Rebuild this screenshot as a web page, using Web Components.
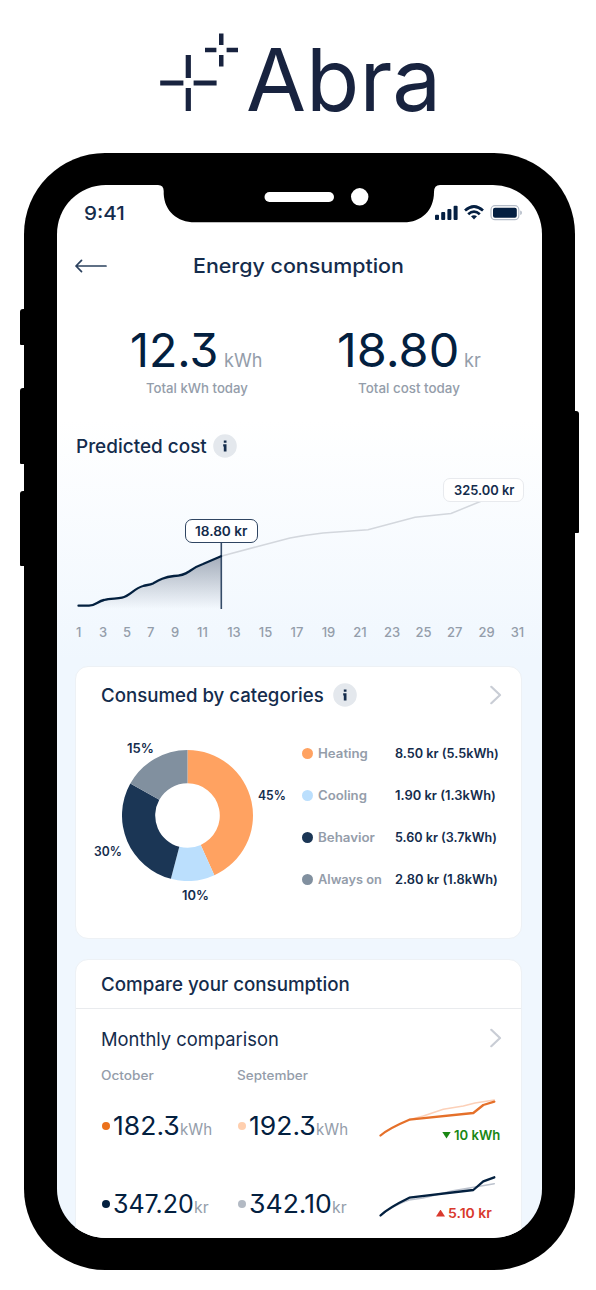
<!DOCTYPE html>
<html lang="en">
<head>
  <meta charset="utf-8">
  <title>Abra</title>
  <style>
    body {
      margin: 0;
      height: 1290px;
      overflow: hidden;
      background: #fff;
      color: #142c4c;
      font-family: Inter, "Liberation Sans", sans-serif;
    }
  </style>
</head>
<body>
  <abra-logo></abra-logo>
  <phone-frame>
    <status-bar></status-bar>
    <app-header>Energy consumption</app-header>
    <today-stats></today-stats>
    <predicted-cost></predicted-cost>
    <category-card></category-card>
    <compare-card></compare-card>
  </phone-frame>

  <script>
    class BaseElement extends HTMLElement {
      constructor() {
        super();
        this.shadowDOM = this.attachShadow({ mode: "open" });
      }

      connectedCallback() {
        this.render();
      }
    }

    class AbraLogo extends BaseElement {
      render() {
        this.shadowDOM.innerHTML = `
          <style>
          :host {
            display: flex;
            height: 153px;
            padding-left: 160px;
            box-sizing: border-box;
            color: #18233f;
          }

          svg {
            margin-top: 33px;
            flex: none;
          }

          fit-text {
            margin-left: 10px;
            margin-top: 29.5px;
            height: 100px;
            font-size: 87px;
            line-height: 100px;
          }
          </style>
          <svg width="78" height="79" viewBox="160 33 78 79" fill="currentColor">
            <path d="M185.7 55h5.2v23h-5.2zM185.7 88h5.2v23h-5.2zM160.2 80.4h23.2v5.2h-23.2zM193.6 80.4h23v5.2h-23z"/>
            <path d="M219 33.5h4.5v11.6h-4.5zM219 55h4.5v11.5h-4.5zM205 47.8h11.4v4.5h-11.4zM226.6 47.8h11.4v4.5h-11.4z"/>
          </svg>
          <fit-text w="189">Abra</fit-text>
        `;
      }
    }

    class PhoneFrame extends BaseElement {
      render() {
        this.shadowDOM.innerHTML = `
          <style>
          :host {
            display: block;
            position: relative;
            box-sizing: border-box;
            width: 551px;
            height: 1117px;
            margin-left: 24px;
            padding: 32px 33px;
            border-radius: 81px;
            background: #000;
          }

          .screen {
            position: relative;
            height: 1053px;
            overflow: hidden;
            border-radius: 49px;
            background: linear-gradient(#fff 0, #fff 235px, #f0f7fe 475px);
          }

          .notch {
            position: absolute;
            left: 98px;
            top: -1px;
          }

          .key {
            position: absolute;
            width: 10px;
            background: #000;
            border-radius: 3px 0 0 1px;
          }
          </style>
          <i class="key" style="left:-4px;top:156px;height:36px"></i>
          <i class="key" style="left:-4px;top:235px;height:76px"></i>
          <i class="key" style="left:-4px;top:338px;height:75px"></i>
          <i class="key" style="right:-4px;top:258px;height:122px;border-radius:0 3px 1px 0"></i>
          <div class="screen">
            <slot></slot>
            <svg class="notch" width="290" height="40" viewBox="155 184 290 40">
              <path d="M155 184V185H158Q163.7 185 163.7 191V194C164.5 211 177 222.3 195 222.3H404C421 222.3 434 211 434 192Q434 185 440 185H445V184Z"/>
              <rect x="264.5" y="192" width="69.5" height="10" rx="5" fill="#fff"/>
              <circle cx="359.7" cy="196.8" r="8.7" fill="#fff"/>
            </svg>
          </div>
        `;
      }
    }

    class StatusBar extends BaseElement {
      render() {
        this.shadowDOM.innerHTML = `
          <style>
          :host {
            display: flex;
            align-items: center;
            height: 56px;
            padding: 0 20px 0 27px;
            font-size: 19px;
            font-weight: 500;
          }

          svg {
            margin-left: auto;
          }
          </style>
          <fit-text w="39.5">9:41</fit-text>
          <svg width="87" height="16" viewBox="435 205 87 16" fill="#041f41">
            <rect x="435" y="214.8" width="4" height="5.2" rx="1"/>
            <rect x="441.2" y="212" width="4" height="8" rx="1"/>
            <rect x="447.4" y="209" width="4" height="11" rx="1"/>
            <rect x="453.6" y="205.8" width="4" height="14.2" rx="1"/>
            <g fill="none" stroke="#041f41" stroke-width="2.7">
              <path d="M465 210.6Q474 202.4 483 210.6"/>
              <path d="M468.2 214.3Q474 209 479.8 214.3"/>
            </g>
            <path d="M471 216.3Q474 214 477 216.3L474 219.6Z"/>
            <rect x="491" y="205.7" width="27.8" height="14" rx="4" fill="none" stroke="#b4bcc8" stroke-width="1.2"/>
            <rect x="493" y="207.7" width="23.8" height="10" rx="2"/>
            <path d="M520.2 210.5Q522 211 522 212.8T520.2 215Z" fill="#b4bcc8"/>
          </svg>
        `;
      }
    }

    class AppHeader extends BaseElement {
      render() {
        this.shadowDOM.innerHTML = `
          <style>
          :host {
            display: grid;
            grid-template-columns: 32px 1fr 32px;
            align-items: center;
            justify-items: center;
            height: 50px;
            padding: 0 21px 0 18px;
            font-size: 20px;
            font-weight: 500;
          }
          </style>
          <svg width="32" height="14" fill="none" stroke="#2b415e" stroke-width="1.7" stroke-linecap="round" stroke-linejoin="round">
            <path d="M31 7H1M6.5 1.4L1 7L6.5 12.6"/>
          </svg>
          <fit-text w="209.5"><slot></slot></fit-text>
        `;
      }
    }

    class TodayStats extends BaseElement {
      render() {
        this.shadowDOM.innerHTML = `
          <style>
          :host {
            display: grid;
            grid-template-columns: 1fr 1fr;
            height: 105px;
            padding: 0 27px 0 33px;
            text-align: center;
          }

          .value {
            display: flex;
            justify-content: center;
            align-items: baseline;
            gap: 8px;
            height: 48px;
            margin-top: 35px;
            line-height: 48px;
            color: #03203f;
          }

          .big {
            font-size: 47px;
            font-feature-settings: "cv09";
          }

          .unit {
            font-size: 18.5px;
            color: #949daa;
          }

          .label {
            margin-top: 6px;
            font-size: 13px;
            font-weight: 500;
            line-height: 16px;
            color: #949daa;
          }
          </style>
          <div>
            <div class="value">
              <fit-text class="big" w="85">12.3</fit-text>
              <fit-text class="unit" w="37">kWh</fit-text>
            </div>
            <div class="label"><fit-text w="101">Total kWh today</fit-text></div>
          </div>
          <div>
            <div class="value">
              <fit-text class="big" w="119">18.80</fit-text>
              <fit-text class="unit" w="15.5">kr</fit-text>
            </div>
            <div class="label"><fit-text w="101">Total cost today</fit-text></div>
          </div>
        `;
      }
    }

    class InfoBadge extends BaseElement {
      render() {
        this.shadowDOM.innerHTML = `
          <style>
          :host {
            display: block;
            width: 24px;
            height: 24px;
          }
          </style>
          <svg width="24" height="24" fill="#142c4c">
            <circle cx="12" cy="12" r="11.8" fill="#e4e8ed"/>
            <path d="M10.8 6.6h2.7v2.2h-2.7zM10.2 10.2h3.3v7.2h-2.7v-5h-.6z"/>
          </svg>
        `;
      }
    }

    class ChevronIcon extends BaseElement {
      render() {
        this.shadowDOM.innerHTML = `
          <style>
          :host {
            display: block;
            height: 20px;
          }
          </style>
          <svg width="12" height="20" fill="none" stroke="#c9cdd5" stroke-width="2.2" stroke-linecap="round" stroke-linejoin="round">
            <path d="M1.3 1.8L10 10L1.3 18.2"/>
          </svg>
        `;
      }
    }

    class PredictedCost extends BaseElement {
      render() {
        const days = [];
        for (let day = 1; day <= 31; day += 2) {
          days.push(`<span class="${day < 10 ? "short" : ""}">${day}</span>`);
        }
        this.shadowDOM.innerHTML = `
          <style>
          :host {
            display: block;
            height: 270px;
            padding: 38px 18px 0 19px;
            box-sizing: border-box;
          }

          .title {
            display: flex;
            align-items: center;
            gap: 7.5px;
            height: 24px;
            font-size: 18.5px;
            font-weight: 500;
          }

          .chart {
            position: relative;
            height: 154px;
            margin-top: 12px;
          }

          svg {
            display: block;
          }

          .tip {
            position: absolute;
            box-sizing: border-box;
            height: 24px;
            border: 1.5px solid #2f4562;
            border-radius: 7px;
            background: #fff;
            font-size: 13px;
            font-weight: 600;
            line-height: 22px;
            text-align: center;
          }

          .now {
            left: 108.5px;
            top: 48.5px;
            width: 73px;
          }

          .end {
            left: 367px;
            top: 7.5px;
            width: 81px;
            border-color: #e8eaee;
          }

          .axis {
            display: flex;
            justify-content: space-between;
            margin: 0 -1px;
            font-size: 13px;
            font-weight: 500;
            line-height: 16px;
            text-align: center;
            color: #949daa;
          }

          .axis span {
            width: 15px;
          }

          .axis .short {
            width: 7.5px;
          }
          </style>
          <div class="title"><fit-text w="129.5">Predicted cost</fit-text><info-badge></info-badge></div>
          <div class="chart">
            <svg width="448" height="154" viewBox="76 470 448 154" fill="none">
              <defs>
                <linearGradient id="fade" x1="0" y1="556" x2="0" y2="609" gradientUnits="userSpaceOnUse">
                  <stop stop-color="#a3acba"/>
                  <stop offset="1" stop-color="#a3acba" stop-opacity="0"/>
                </linearGradient>
              </defs>
              <path fill="url(#fade)" d="M78.5 605.7H89C95 605.7 98 601 104 600C110 598 116 599 122 597.7C130 596 134 588.5 143 586C147 584.5 149 585.5 153 583.5C159 580 164 577 174 576C181 575.8 184 575 189 571.5C195 567 197 566 203 564L221.3 556V609H78.5Z"/>
              <path stroke="#d3d7dd" stroke-width="1.5" d="M221 556.3L256.7 546.7L290 538Q306 535 323 533L368 529.7L415 517.3L451 513.5L484 500"/>
              <path stroke="#344b68" stroke-width="1.6" d="M221.3 541V609"/>
              <path stroke="#03203f" stroke-width="2.3" stroke-linecap="round" d="M78.5 605.7H89C95 605.7 98 601 104 600C110 598 116 599 122 597.7C130 596 134 588.5 143 586C147 584.5 149 585.5 153 583.5C159 580 164 577 174 576C181 575.8 184 575 189 571.5C195 567 197 566 203 564L221 556.3"/>
            </svg>
            <div class="tip now"><fit-text w="51.5">18.80 kr</fit-text></div>
            <div class="tip end"><fit-text w="59.5">325.00 kr</fit-text></div>
          </div>
          <div class="axis">${days.join("")}</div>
        `;
      }
    }

    class CategoryCard extends BaseElement {
      // start and end are degrees clockwise from the top
      slice(start, end, color) {
        const point = (deg, r) => {
          const a = (deg * Math.PI) / 180;
          return `${(65.5 + r * Math.sin(a)).toFixed(2)} ${(65.5 - r * Math.cos(a)).toFixed(2)}`;
        };
        return `<path fill="${color}" d="M${point(start, 65.5)}A65.5 65.5 0 0 1 ${point(end, 65.5)}L${point(end, 32.3)}A32.3 32.3 0 0 0 ${point(start, 32.3)}Z"/>`;
      }

      render() {
        const rows = [
          ["Heating", 49, "8.50 kr (5.5kWh)", 103, "#ffa261"],
          ["Cooling", 48, "1.90 kr (1.3kWh)", 100, "#bbdffd"],
          ["Behavior", 56, "5.60 kr (3.7kWh)", 101, "#1b3655"],
          ["Always on", 63, "2.80 kr (1.8kWh)", 102, "#81909f"],
        ];
        this.shadowDOM.innerHTML = `
          <style>
          :host {
            display: block;
            box-sizing: border-box;
            width: 447px;
            height: 273px;
            margin-left: 18px;
            padding: 15px 19.5px 0 25.5px;
            border: 1px solid #edf1f5;
            border-radius: 13px;
            background: #fff;
          }

          .title {
            display: flex;
            align-items: center;
            gap: 9.5px;
            height: 25px;
            font-size: 18.5px;
            font-weight: 500;
          }

          chevron-icon {
            margin-left: auto;
          }

          .body {
            display: flex;
            font-size: 12.5px;
            font-weight: 600;
          }

          .donut {
            position: relative;
            width: 131px;
            height: 131px;
            margin: 43px 0 0 20.7px;
          }

          .donut fit-text {
            position: absolute;
            line-height: 16px;
          }

          .legend {
            display: grid;
            grid-template-columns: 16.3px 77px 104px;
            grid-auto-rows: 41.8px;
            align-items: center;
            margin: 26px 0 0 48.8px;
          }

          .legend i {
            width: 11px;
            height: 11px;
            border-radius: 50%;
          }

          .name {
            color: #949daa;
          }
          </style>
          <div class="title">
            <fit-text w="221.5">Consumed by categories</fit-text>
            <info-badge></info-badge>
            <chevron-icon></chevron-icon>
          </div>
          <div class="body">
            <div class="donut">
              <svg width="131" height="131">
                ${this.slice(0, 155.8, "#ffa261")}
                ${this.slice(155.8, 194.7, "#bbdffd")}
                ${this.slice(194.7, 299.2, "#1b3655")}
                ${this.slice(299.2, 360, "#81909f")}
              </svg>
              <fit-text w="26" style="left:5px;top:-9px">15%</fit-text>
              <fit-text w="27" style="left:136px;top:38px">45%</fit-text>
              <fit-text w="27" style="left:-27.5px;top:94px">30%</fit-text>
              <fit-text w="26" style="left:60px;top:137.5px">10%</fit-text>
            </div>
            <div class="legend">
              ${rows.map(([name, nameWidth, value, valueWidth, color]) => `
                <i style="background:${color}"></i>
                <span class="name"><fit-text w="${nameWidth}">${name}</fit-text></span>
                <span><fit-text w="${valueWidth}">${value}</fit-text></span>
              `).join("")}
            </div>
          </div>
        `;
      }
    }

    class CompareCard extends BaseElement {
      render() {
        this.shadowDOM.innerHTML = `
          <style>
          :host {
            display: block;
            box-sizing: border-box;
            width: 447px;
            height: 320px;
            margin: 20px 0 0 18px;
            border: 1px solid #edf1f5;
            border-radius: 13px;
            background: #fff;
          }

          .title {
            height: 48px;
            padding-left: 25.5px;
            border-bottom: 1px solid #e9ebee;
            font-size: 18.5px;
            font-weight: 500;
            line-height: 48px;
          }

          .sub {
            display: flex;
            align-items: center;
            justify-content: space-between;
            height: 20px;
            margin-top: 19px;
            padding: 0 19.5px 0 25.5px;
            font-size: 18.5px;
          }

          .sub fit-text {
            margin-top: 2px;
          }

          .months {
            display: grid;
            grid-template-columns: 136px 1fr;
            margin-top: 18.5px;
            padding-left: 25.5px;
            font-size: 12.5px;
            font-weight: 500;
            line-height: 18px;
            color: #949daa;
          }

          .row {
            display: grid;
            grid-template-columns: 136px 141px 125px;
            height: 78px;
            padding-left: 25.5px;
          }

          .amount {
            display: flex;
            align-items: baseline;
            height: 30px;
            margin-top: 26px;
            line-height: 30px;
            color: #03203f;
          }

          .amount i {
            align-self: center;
            width: 8px;
            height: 8px;
            margin-right: 3.5px;
            border-radius: 50%;
          }

          .num {
            font-size: 25.5px;
            font-feature-settings: "cv09";
          }

          .unit {
            margin-left: 2px;
            font-size: 16px;
            color: #949daa;
          }

          .trend svg {
            display: block;
            margin-top: 9.5px;
          }

          .diff {
            display: flex;
            align-items: center;
            gap: 3px;
            height: 16px;
            margin-top: -11px;
            font-size: 13px;
            font-weight: 600;
          }

          .diff::before {
            content: "";
            width: 9px;
            height: 7px;
            background: currentColor;
          }

          .down {
            padding-left: 63.5px;
            color: #198713;
          }

          .down::before {
            clip-path: polygon(0 0, 100% 0, 50% 100%);
          }

          .up {
            padding-left: 57.5px;
            color: #d9392d;
          }

          .up::before {
            clip-path: polygon(50% 0, 100% 100%, 0 100%);
          }
          </style>
          <div class="title"><fit-text w="247.5">Compare your consumption</fit-text></div>
          <div class="sub"><fit-text w="176.5">Monthly comparison</fit-text><chevron-icon></chevron-icon></div>
          <div class="months">
            <span><fit-text w="52">October</fit-text></span>
            <span><fit-text w="70">September</fit-text></span>
          </div>
          <div class="row">
            <div class="amount">
              <i style="background:#ec711b"></i>
              <fit-text class="num" w="65">182.3</fit-text>
              <fit-text class="unit" w="31">kWh</fit-text>
            </div>
            <div class="amount">
              <i style="background:#ffcfae"></i>
              <fit-text class="num" w="65">192.3</fit-text>
              <fit-text class="unit" w="31">kWh</fit-text>
            </div>
            <div class="trend">
              <svg width="120" height="44" viewBox="379 1094 120 44" fill="none" stroke-linecap="round" stroke-linejoin="round">
                <path stroke="#fcd0b8" stroke-width="1.5" d="M409.3 1119.7L423.3 1116L443.3 1109.3L463.3 1106L475 1103L494.3 1100"/>
                <path stroke="#e5702a" stroke-width="2.3" d="M380.5 1135.5Q388 1128.7 409.3 1119.7L473.3 1113L483.3 1105L494.3 1101.7"/>
              </svg>
              <div class="diff down"><fit-text w="45.5">10 kWh</fit-text></div>
            </div>
          </div>
          <div class="row">
            <div class="amount">
              <i style="background:#03203f"></i>
              <fit-text class="num" w="79">347.20</fit-text>
              <fit-text class="unit" w="13.5">kr</fit-text>
            </div>
            <div class="amount">
              <i style="background:#b3bac4"></i>
              <fit-text class="num" w="81">342.10</fit-text>
              <fit-text class="unit" w="13.5">kr</fit-text>
            </div>
            <div class="trend">
              <svg width="120" height="44" viewBox="379 1172 120 44" overflow="visible" fill="none" stroke-linecap="round" stroke-linejoin="round">
                <path stroke="#bcc2cd" stroke-width="1.5" d="M380.5 1215Q396 1204 409 1200L423 1198L453 1190.7L494.3 1183.7"/>
                <path stroke="#03203f" stroke-width="2.3" d="M380.5 1215.5Q388 1208 409.3 1197.7L473.3 1190L483.3 1181.3L494.3 1177.3"/>
              </svg>
              <div class="diff up"><fit-text w="43">5.10 kr</fit-text></div>
            </div>
          </div>
        `;
      }
    }

    // Stretches its text so that the glyphs span the width given in "w".
    class FitText extends BaseElement {
      render() {
        this.shadowDOM.innerHTML = `
          <style>
          :host {
            display: inline-block;
            white-space: nowrap;
            text-align: left;
          }

          span {
            display: inline-block;
            margin-left: -0.02em;
            transform-origin: left;
          }
          </style>
          <span><slot></slot></span>
        `;
        const span = this.shadowDOM.querySelector("span");
        const width = Number(this.getAttribute("w"));
        const size = parseFloat(getComputedStyle(this).fontSize);
        const natural = span.getBoundingClientRect().width;
        span.style.transform = `scaleX(${(width + size * 0.07) / natural})`;
        this.style.width = `${width}px`;
      }
    }

    customElements.define("abra-logo", AbraLogo);
    customElements.define("phone-frame", PhoneFrame);
    customElements.define("status-bar", StatusBar);
    customElements.define("app-header", AppHeader);
    customElements.define("today-stats", TodayStats);
    customElements.define("info-badge", InfoBadge);
    customElements.define("chevron-icon", ChevronIcon);
    customElements.define("predicted-cost", PredictedCost);
    customElements.define("category-card", CategoryCard);
    customElements.define("compare-card", CompareCard);
    // last, so the surrounding font styles are in place when it measures
    customElements.define("fit-text", FitText);
  </script>
</body>
</html>
